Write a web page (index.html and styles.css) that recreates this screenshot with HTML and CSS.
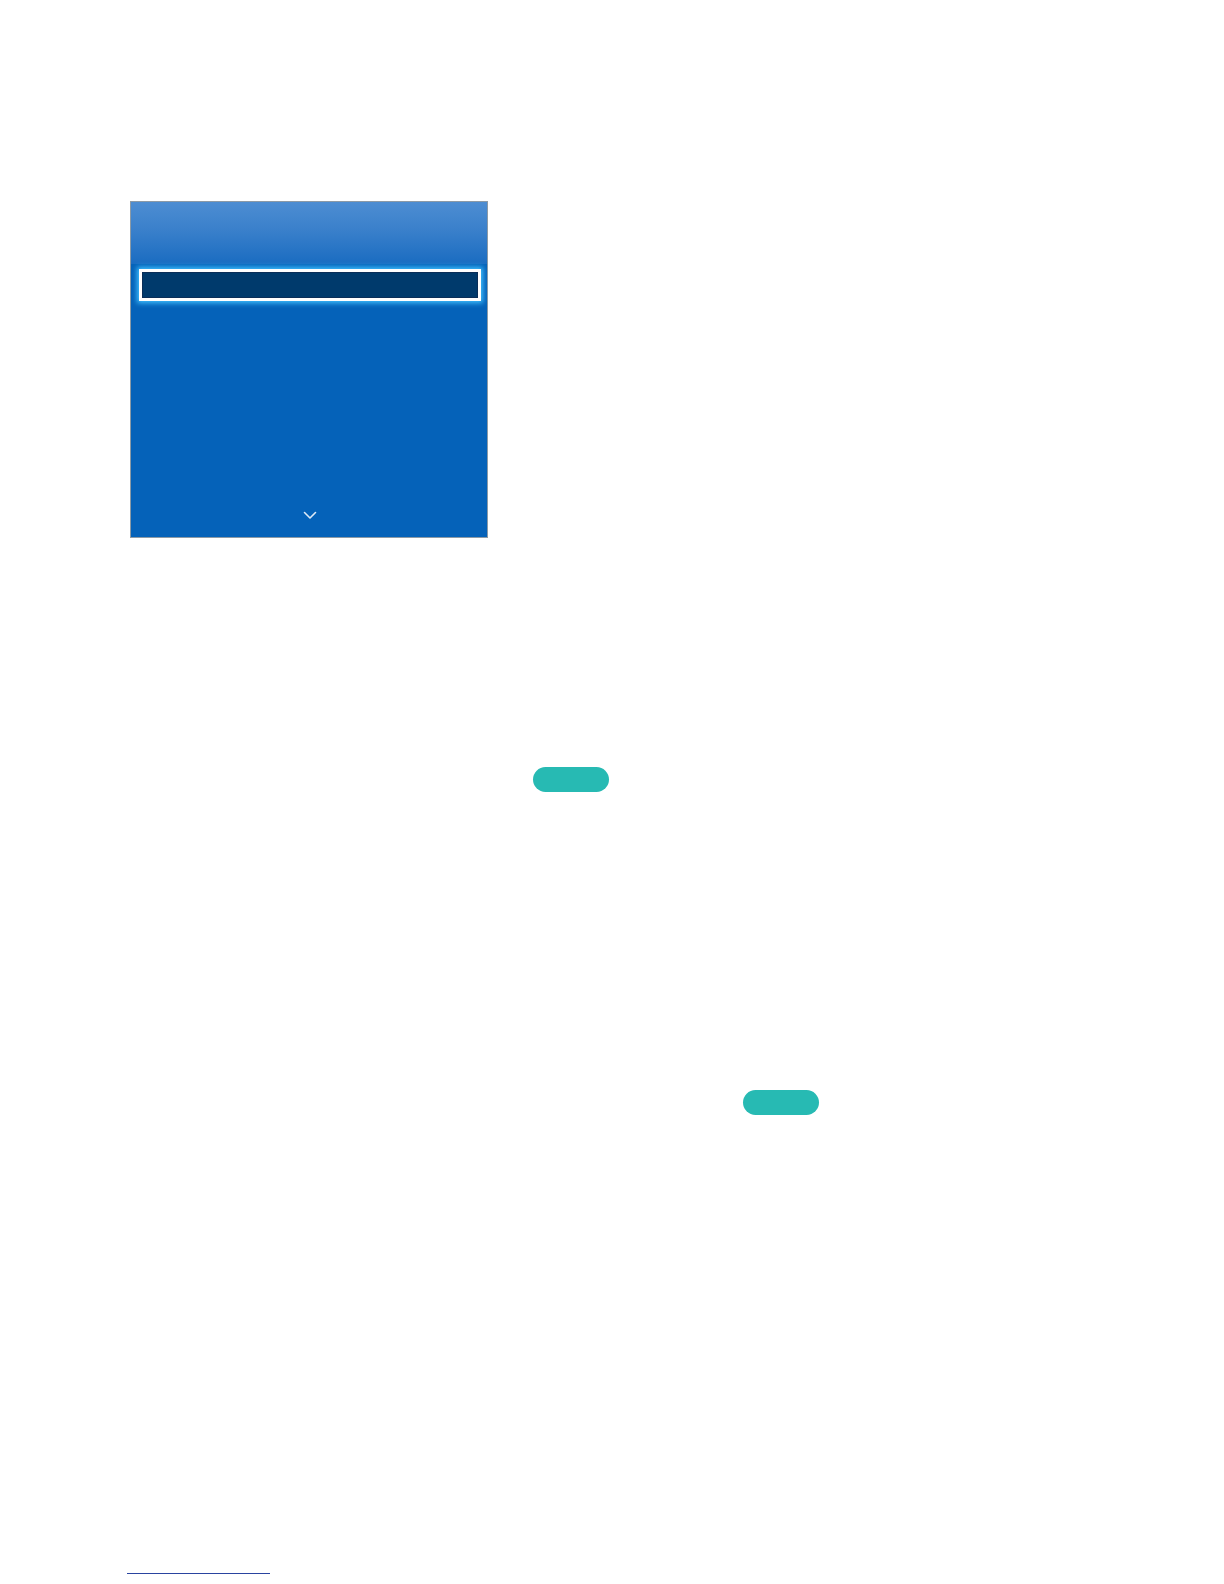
FILE: index.html
```html
<!DOCTYPE html>
<html lang="en">
<head>
<meta charset="utf-8">
<title>Menu</title>
<link rel="stylesheet" href="styles.css">
</head>
<body>
<div class="page">
  <div class="menu-panel">
    <div class="menu-header"></div>
    <div class="menu-item selected"></div>
    <div class="menu-list"></div>
    <div class="menu-more">
      <svg class="chevron" width="14" height="9" viewBox="0 0 14 9" aria-hidden="true">
        <path d="M1.5 1.5 L7 7 L12.5 1.5" fill="none" stroke="#dfeaf7" stroke-width="1.6" stroke-linecap="round" stroke-linejoin="round"/>
      </svg>
    </div>
  </div>
  <div class="badge-row first"><span class="badge"></span></div>
  <div class="badge-row second"><span class="badge"></span></div>
  <div class="footer-link"></div>
</div>
</body>
</html>
```
FILE: styles.css
```css
html, body {
  margin: 0;
  padding: 0;
  background: #ffffff;
  font-family: "Liberation Sans", Arial, sans-serif;
}

.page {
  width: 1224px;
  height: 1584px;
  padding-top: 201px;
  box-sizing: border-box;
  overflow: hidden;
}

.menu-panel {
  margin-left: 130px;
  width: 358px;
  height: 337px;
  box-sizing: border-box;
  border: 1px solid #8c9aa6;
  background: #0562b9;
  display: flex;
  flex-direction: column;
}

.menu-header {
  height: 62px;
  flex: none;
  background: linear-gradient(to bottom, #4d8dd2 0%, #3a80cb 45%, #1a6cc1 100%);
}

.menu-item.selected {
  flex: none;
  height: 32px;
  margin: 5px 6px 0 8px;
  box-sizing: border-box;
  border: 3px solid #ffffff;
  background: #003a6c;
  box-shadow: 0 0 5px 2px #3fc0ff, inset 0 0 0 1px #0a2e58;
}

.menu-list {
  flex: 1;
}

.menu-more {
  flex: none;
  height: 26px;
  display: flex;
  justify-content: center;
  align-items: flex-start;
  padding-left: 2px;
}

.chevron {
  display: block;
}

.badge-row {
  display: flex;
}

.badge-row.first {
  margin-top: 229px;
  padding-left: 533px;
}

.badge-row.second {
  margin-top: 298px;
  padding-left: 743px;
}

.badge {
  display: block;
  width: 76px;
  height: 25px;
  border-radius: 13px;
  background: #27bab3;
}

.footer-link {
  margin-top: 458px;
  margin-left: 127px;
  width: 143px;
  border-bottom: 1px solid #2a44a0;
}
```
